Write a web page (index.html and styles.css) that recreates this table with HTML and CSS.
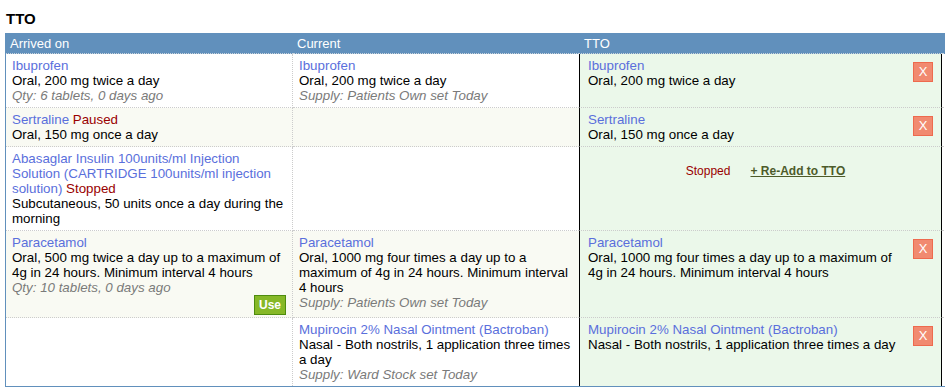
FILE: index.html
```html
<!DOCTYPE html>
<html>
<head>
<meta charset="utf-8">
<title>TTO</title>
<link rel="stylesheet" href="styles.css">
</head>
<body>
<div class="page">
  <h1 class="title">TTO</h1>
  <table class="tto">
    <thead>
      <tr>
        <th class="c1">Arrived on</th>
        <th class="c2">Current</th>
        <th class="c3">TTO</th>
        <th class="c4"></th>
      </tr>
    </thead>
    <tbody>
      <tr>
        <td class="c1">
          <div class="drug">Ibuprofen</div>
          <div>Oral, 200 mg twice a day</div>
          <div class="note">Qty: 6 tablets, 0 days ago</div>
        </td>
        <td class="c2">
          <div class="drug">Ibuprofen</div>
          <div>Oral, 200 mg twice a day</div>
          <div class="note">Supply: Patients Own set Today</div>
        </td>
        <td class="c3">
          <div class="tto-item">
            <div class="tto-text">
              <div class="drug">Ibuprofen</div>
              <div>Oral, 200 mg twice a day</div>
            </div>
            <button class="remove">X</button>
          </div>
        </td>
        <td class="c4"></td>
      </tr>
      <tr class="alt">
        <td class="c1">
          <div><span class="drug">Sertraline</span> <span class="status">Paused</span></div>
          <div>Oral, 150 mg once a day</div>
        </td>
        <td class="c2"></td>
        <td class="c3">
          <div class="tto-item">
            <div class="tto-text">
              <div class="drug">Sertraline</div>
              <div>Oral, 150 mg once a day</div>
            </div>
            <button class="remove">X</button>
          </div>
        </td>
        <td class="c4"></td>
      </tr>
      <tr>
        <td class="c1">
          <div><span class="drug">Abasaglar Insulin 100units/ml Injection Solution (CARTRIDGE 100units/ml injection solution)</span> <span class="status">Stopped</span></div>
          <div>Subcutaneous, 50 units once a day during the morning</div>
        </td>
        <td class="c2"></td>
        <td class="c3">
          <div class="stopped-row">
            <span class="stopped">Stopped</span>
            <a class="readd" href="#">+ Re-Add to TTO</a>
          </div>
        </td>
        <td class="c4"></td>
      </tr>
      <tr class="alt">
        <td class="c1 has-action">
          <div class="drug">Paracetamol</div>
          <div>Oral, 500 mg twice a day up to a maximum of 4g in 24 hours. Minimum interval 4 hours</div>
          <div class="note">Qty: 10 tablets, 0 days ago</div>
          <div class="actions"><button class="use">Use</button></div>
        </td>
        <td class="c2">
          <div class="drug">Paracetamol</div>
          <div>Oral, 1000 mg four times a day up to a maximum of 4g in 24 hours. Minimum interval 4 hours</div>
          <div class="note">Supply: Patients Own set Today</div>
        </td>
        <td class="c3">
          <div class="tto-item">
            <div class="tto-text">
              <div class="drug">Paracetamol</div>
              <div>Oral, 1000 mg four times a day up to a maximum of 4g in 24 hours. Minimum interval 4 hours</div>
            </div>
            <button class="remove">X</button>
          </div>
        </td>
        <td class="c4"></td>
      </tr>
      <tr class="last">
        <td class="c1"></td>
        <td class="c2">
          <div class="drug">Mupirocin 2% Nasal Ointment (Bactroban)</div>
          <div>Nasal - Both nostrils, 1 application three times a day</div>
          <div class="note">Supply: Ward Stock set Today</div>
        </td>
        <td class="c3">
          <div class="tto-item">
            <div class="tto-text">
              <div class="drug">Mupirocin 2% Nasal Ointment (Bactroban)</div>
              <div>Nasal - Both nostrils, 1 application three times a day</div>
            </div>
            <button class="remove">X</button>
          </div>
        </td>
        <td class="c4"></td>
      </tr>
    </tbody>
  </table>
</div>
</body>
</html>
```

FILE: styles.css
```css
* {
  box-sizing: border-box;
}

html, body {
  margin: 0;
  padding: 0;
  background: #ffffff;
  overflow: hidden;
}

body {
  font-family: "Liberation Sans", Arial, sans-serif;
  font-size: 13.33px;
  line-height: 15px;
  color: #000000;
}

.page {
  padding: 10px 0 0 5px;
}

.title {
  margin: 0 0 5px 0;
  padding-left: 1px;
  font-size: 15px;
  line-height: 18px;
  font-weight: bold;
  color: #000000;
}

.tto {
  table-layout: fixed;
  border-collapse: separate;
  border-spacing: 0;
  width: 948px;
  border: 1px solid #6190bc;
  font-size: 13.33px;
}

.tto th {
  background: #6190bc;
  color: #ffffff;
  font-weight: normal;
  font-size: 13px;
  text-align: left;
  height: 20px;
  line-height: 19px;
  padding: 0 4px;
  border-bottom: 1px dotted #c8d3dc;
}

.tto th.c1 { width: 287px; }
.tto th.c2 { width: 286px; }
.tto th.c3 { width: 363px; padding-left: 5px; }
.tto th.c4 { width: 10px; }

.tto td {
  vertical-align: top;
  padding: 4px 6px;
  border-bottom: 1px dotted #cccccc;
  background: #ffffff;
}

.tto tr.alt td {
  background: #f9faf3;
}

.tto td.c1 {
  border-right: 1px dotted #cccccc;
}

.tto td.c3,
.tto tr.alt td.c3 {
  background: #ebf8ea;
  border-left: 1px solid #000000;
  border-right: 1px solid #000000;
  padding: 4px 8px 4px 8px;
}

.tto td.c4,
.tto tr.alt td.c4 {
  background: #ffffff;
  padding: 0;
}

.tto tr.last td {
  border-bottom: none;
}

.tto td.has-action {
  padding-bottom: 2px;
}

.drug {
  color: #5a6fdc;
}

.status {
  color: #990000;
}

.note {
  color: #7a7a7a;
  font-style: italic;
}

.actions {
  display: flex;
  justify-content: flex-end;
}

.use {
  width: 32px;
  height: 20px;
  margin: 0;
  padding: 0;
  background: #86b827;
  border: 1px solid #4e8c0e;
  color: #ffffff;
  font-family: "Liberation Sans", Arial, sans-serif;
  font-size: 12px;
  font-weight: bold;
  line-height: 18px;
}

.tto-item {
  display: flex;
  align-items: flex-start;
  gap: 8px;
}

.tto-text {
  flex: 1;
  min-width: 0;
}

.remove {
  flex: none;
  width: 20px;
  height: 20px;
  margin: 4px 0 0 0;
  padding: 0;
  background: #f18a70;
  border: 1px solid #ee6a4e;
  color: #ffffff;
  font-family: "Liberation Sans", Arial, sans-serif;
  font-size: 13px;
  line-height: 18px;
  text-align: center;
}

.stopped-row {
  display: flex;
  justify-content: center;
  gap: 20px;
  margin-top: 13px;
  padding-left: 10px;
  font-size: 12px;
  line-height: 15px;
}

.stopped {
  color: #990000;
}

.readd {
  color: #4d5b2a;
  font-weight: bold;
  text-decoration: underline;
}
```
